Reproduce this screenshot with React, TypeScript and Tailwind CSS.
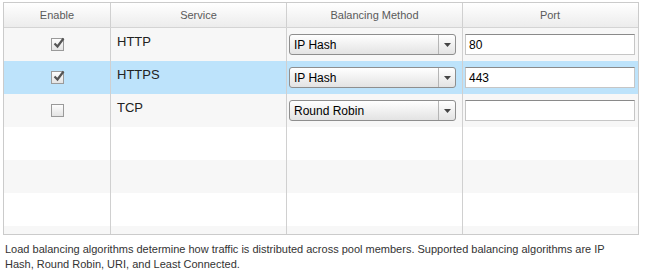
import React from 'react';

type Row = { enabled: boolean; service: string; method: string; port: string; selected?: boolean };

const rows: Row[] = [
    { enabled: true, service: 'HTTP', method: 'IP Hash', port: '80' },
    { enabled: true, service: 'HTTPS', method: 'IP Hash', port: '443', selected: true },
    { enabled: false, service: 'TCP', method: 'Round Robin', port: '' },
];

const cols = 'grid grid-cols-[106px_176px_176px_175px]';

function Checkbox({ checked }: { checked: boolean }) {
    return (
        <div className="w-[13px] h-[13px] border border-[#9a9a9a] bg-gradient-to-b from-[#fdfdfd] to-[#e4e4e4] relative">
            {checked && (
                <svg className="absolute left-[1px] top-[-2px]" width="12" height="12" viewBox="0 0 12 12">
                    <path d="M1.5 6.5 L4.5 9.5 L10.5 1.5" fill="none" stroke="#555" strokeWidth="2.2" />
                </svg>
            )}
        </div>
    );
}

function Select({ value }: { value: string }) {
    return (
        <div className="flex h-[21px] w-[167px] rounded-[3px] border border-[#8e8e8e] bg-gradient-to-b from-[#ffffff] to-[#e3e3e3] text-[12px] text-black">
            <div className="flex-1 flex items-center pl-[4px]">{value}</div>
            <div className="w-[17px] border-l border-[#b5b5b5] flex items-center justify-center">
                <svg width="7" height="4" viewBox="0 0 7 4"><path d="M0 0 H7 L3.5 4 Z" fill="#444" /></svg>
            </div>
        </div>
    );
}

function PortInput({ value }: { value: string }) {
    return (
        <div className="h-[21px] w-[170px] border border-[#c6c6c6] border-t-[#8a8a8a] bg-white text-[12px] text-black flex items-center pl-[3px]">
            {value}
        </div>
    );
}

export default function App() {
    const empty = [3, 4, 5, 6];
    return (
        <div className="w-[648px] h-[277px] bg-white pt-[2px] pl-[3px]" style={{ fontFamily: '"Liberation Sans", Arial, sans-serif' }}>
            <div className="w-[636px] border border-[#cbcbcb]">
                <div className={`${cols} h-[25px] bg-gradient-to-b from-[#ffffff] to-[#ececec] text-[11px] text-[#5a5a5a] border-b border-[#d4d4d4]`}>
                    <div className="flex items-center justify-center">Enable</div>
                    <div className="flex items-center justify-center border-l border-[#d0d0d0]">Service</div>
                    <div className="flex items-center justify-center border-l border-[#d0d0d0]">Balancing Method</div>
                    <div className="flex items-center justify-center border-l border-[#d0d0d0]">Port</div>
                </div>
                <div className="h-[206px] overflow-hidden">
                    {rows.map((r, i) => (
                        <div key={r.service} className={`${cols} h-[33px] ${r.selected ? 'bg-[#bde3fb]' : i % 2 === 0 ? 'bg-[#f7f7f7]' : 'bg-white'}`}>
                            <div className="flex justify-center pt-[10px]"><Checkbox checked={r.enabled} /></div>
                            <div className="border-l border-[#d0d0d0] pl-[6px] pt-[7px] text-[13px] leading-[14px] text-[#222]">{r.service}</div>
                            <div className="border-l border-[#d0d0d0] pl-[2px] pt-[6px]"><Select value={r.method} /></div>
                            <div className="border-l border-[#d0d0d0] pl-[2px] pt-[6px]"><PortInput value={r.port} /></div>
                        </div>
                    ))}
                    {empty.map((n) => (
                        <div key={n} className={`${cols} h-[33px] ${n % 2 === 0 ? 'bg-[#f7f7f7]' : 'bg-white'}`}>
                            <div />
                            <div className="border-l border-[#d0d0d0]" />
                            <div className="border-l border-[#d0d0d0]" />
                            <div className="border-l border-[#d0d0d0]" />
                        </div>
                    ))}
                </div>
            </div>
            <p className="mt-[7px] pl-[2px] w-[615px] text-[11px] leading-[15px] text-[#333]">
                Load balancing algorithms determine how traffic is distributed across pool members. Supported balancing algorithms are IP Hash, Round Robin, URI, and Least Connected.
            </p>
        </div>
    );
}
